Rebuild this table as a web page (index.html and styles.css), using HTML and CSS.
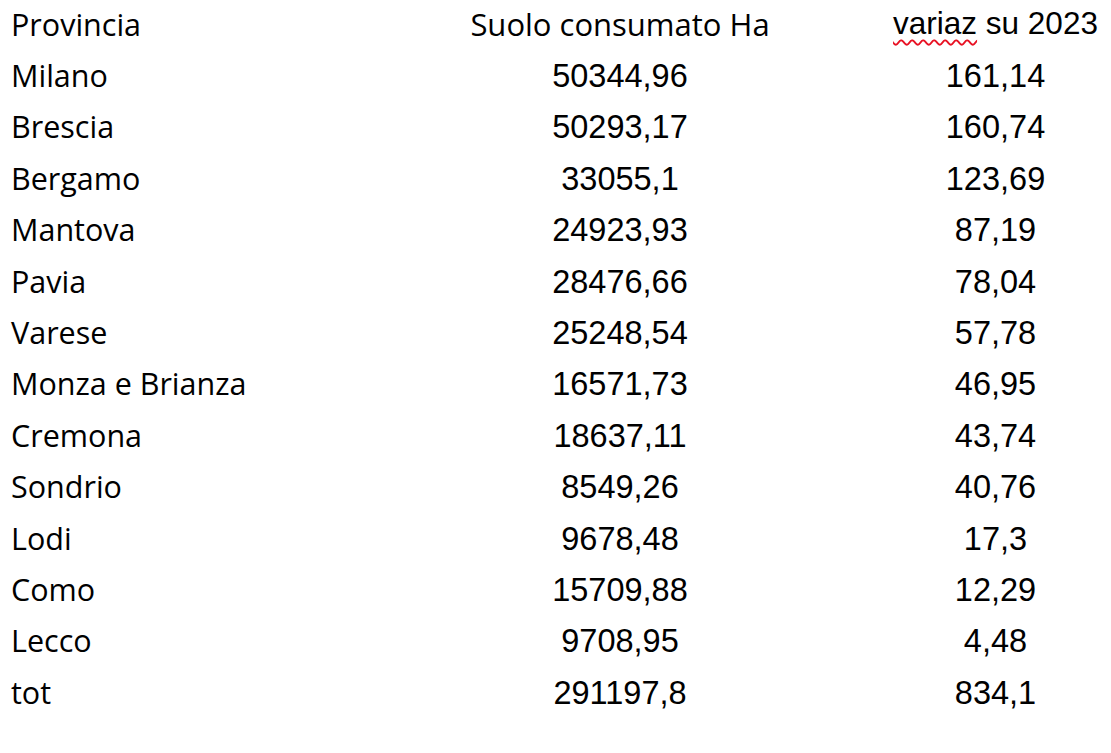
FILE: index.html
```html
<!DOCTYPE html>
<html lang="it">
<head>
<meta charset="utf-8">
<title>Suolo consumato</title>
<link rel="stylesheet" href="styles.css">
</head>
<body>
<div class="table">
  <div class="cell name">Provincia</div><div class="cell head2">Suolo consumato Ha</div><div class="cell num3 head3"><span class="spell">variaz</span> su 2023</div>
  <div class="cell name">Milano</div><div class="cell num2">50344,96</div><div class="cell num3">161,14</div>
  <div class="cell name">Brescia</div><div class="cell num2">50293,17</div><div class="cell num3">160,74</div>
  <div class="cell name">Bergamo</div><div class="cell num2">33055,1</div><div class="cell num3">123,69</div>
  <div class="cell name">Mantova</div><div class="cell num2">24923,93</div><div class="cell num3">87,19</div>
  <div class="cell name">Pavia</div><div class="cell num2">28476,66</div><div class="cell num3">78,04</div>
  <div class="cell name">Varese</div><div class="cell num2">25248,54</div><div class="cell num3">57,78</div>
  <div class="cell name">Monza e Brianza</div><div class="cell num2">16571,73</div><div class="cell num3">46,95</div>
  <div class="cell name">Cremona</div><div class="cell num2">18637,11</div><div class="cell num3">43,74</div>
  <div class="cell name">Sondrio</div><div class="cell num2">8549,26</div><div class="cell num3">40,76</div>
  <div class="cell name">Lodi</div><div class="cell num2">9678,48</div><div class="cell num3">17,3</div>
  <div class="cell name">Como</div><div class="cell num2">15709,88</div><div class="cell num3">12,29</div>
  <div class="cell name">Lecco</div><div class="cell num2">9708,95</div><div class="cell num3">4,48</div>
  <div class="cell name">tot</div><div class="cell num2">291197,8</div><div class="cell num3">834,1</div>
</div>
</body>
</html>
```

FILE: styles.css
```css
html, body {
  margin: 0;
  padding: 0;
  background: #ffffff;
}
body {
  color: #000000;
}
.table {
  display: grid;
  grid-template-columns: 440px 360px 1fr;
  grid-auto-rows: 51.4px;
  align-items: center;
  margin-top: -2px;
}
.cell {
  white-space: nowrap;
}
.name, .head2 {
  font-family: "Open Sans", "Noto Sans", sans-serif;
  font-size: 30.5px;
}
.name {
  padding-left: 11px;
}
.head2 {
  text-align: center;
  font-size: 31px;
}
.num2, .num3 {
  font-family: "Liberation Sans", Arial, sans-serif;
  font-size: 32.5px;
  text-align: center;
  padding-top: 3px;
}
.num3 {
  padding-left: 80px;
}
.head3 {
  font-size: 31.5px;
  padding-top: 0;
}
.spell {
  text-decoration: underline wavy #e81123;
  text-decoration-thickness: 1.5px;
  text-underline-offset: 5px;
}
```
